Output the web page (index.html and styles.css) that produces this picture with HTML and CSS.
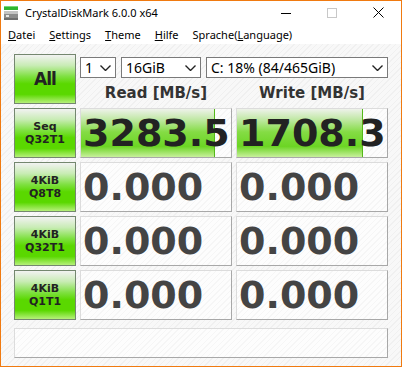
FILE: index.html
```html
<!DOCTYPE html>
<html lang="de">
<head>
    <meta charset="UTF-8">
    <title>CrystalDiskMark 6.0.0 x64</title>
    <link rel="stylesheet" href="styles.css">
</head>
<body>
    <div class="window">
        <div class="titlebar">
            <svg class="app-icon" width="14" height="14" viewBox="0 0 14 14">
                <rect x="0" y="0" width="14" height="4" fill="#2fb52f"/>
                <rect x="0" y="0" width="14" height="1" fill="#7ad97a"/>
                <rect x="0" y="5" width="14" height="9" fill="#8c8c8c"/>
                <rect x="0" y="5" width="14" height="3" fill="#c4c4c4"/>
                <rect x="0" y="12" width="14" height="2" fill="#6e6e6e"/>
                <rect x="2" y="9" width="3" height="2" fill="#e6e6e6"/>
            </svg>
            <span class="title">CrystalDiskMark 6.0.0 x64</span>
            <div class="controls">
                <span class="ctl">
                    <svg width="10" height="10" viewBox="0 0 10 10"><path d="M0 5.5h10" stroke="#000" stroke-width="1"/></svg>
                </span>
                <span class="ctl">
                    <svg width="10" height="10" viewBox="0 0 10 10"><rect x="0.5" y="0.5" width="9" height="9" fill="none" stroke="#c8c8c8"/></svg>
                </span>
                <span class="ctl">
                    <svg width="11" height="11" viewBox="0 0 11 11"><path d="M0.5 0.5l10 10M10.5 0.5l-10 10" stroke="#000" stroke-width="1"/></svg>
                </span>
            </div>
        </div>

        <div class="menubar">
            <span class="menu-item"><u>D</u>atei</span>
            <span class="menu-item"><u>S</u>ettings</span>
            <span class="menu-item"><u>T</u>heme</span>
            <span class="menu-item"><u>H</u>ilfe</span>
            <span class="menu-item">Sprache(<u>L</u>anguage)</span>
        </div>

        <div class="main">
            <div class="grid">
                <div class="btn btn-all">All</div>
                <div class="top-area">
                    <div class="selects">
                        <div class="select sel-count">1<svg class="chev" width="11" height="6" viewBox="0 0 11 6"><path d="M0.5 0.5l5 5 5-5" fill="none" stroke="#222" stroke-width="1.4"/></svg></div>
                        <div class="select sel-size">16GiB<svg class="chev" width="11" height="6" viewBox="0 0 11 6"><path d="M0.5 0.5l5 5 5-5" fill="none" stroke="#222" stroke-width="1.4"/></svg></div>
                        <div class="select sel-drive">C: 18% (84/465GiB)<svg class="chev" width="11" height="6" viewBox="0 0 11 6"><path d="M0.5 0.5l5 5 5-5" fill="none" stroke="#222" stroke-width="1.4"/></svg></div>
                    </div>
                    <div class="headers">
                        <div class="head">Read [MB/s]</div>
                        <div class="head">Write [MB/s]</div>
                    </div>
                </div>

                <div class="btn">Seq<br>Q32T1</div>
                <div class="value"><div class="bar" style="width: 89.4%"></div><span class="num done">3283.5</span></div>
                <div class="value"><div class="bar" style="width: 84%"></div><span class="num done">1708.3</span></div>

                <div class="btn">4KiB<br>Q8T8</div>
                <div class="value"><span class="num">0.000</span></div>
                <div class="value"><span class="num">0.000</span></div>

                <div class="btn">4KiB<br>Q32T1</div>
                <div class="value"><span class="num">0.000</span></div>
                <div class="value"><span class="num">0.000</span></div>

                <div class="btn">4KiB<br>Q1T1</div>
                <div class="value"><span class="num">0.000</span></div>
                <div class="value"><span class="num">0.000</span></div>
            </div>
            <div class="comment"></div>
        </div>
    </div>
</body>
</html>
```

FILE: styles.css
```css
* {
    box-sizing: border-box;
}

body {
    margin: 0;
    background: #ffffff;
}

.window {
    width: 402px;
    height: 367px;
    border: 1px solid #f07a10;
    display: flex;
    flex-direction: column;
    overflow: hidden;
    font-family: "Noto Sans", sans-serif;
    font-size: 11px;
    color: #000;
}

.titlebar {
    height: 23px;
    display: flex;
    align-items: center;
    background: #fff;
}

.app-icon {
    margin-left: 3px;
    margin-right: 7px;
}

.title {
    font-size: 11px;
}

.controls {
    margin-left: auto;
    display: flex;
    height: 100%;
}

.ctl {
    width: 46px;
    display: flex;
    align-items: center;
    justify-content: center;
}

.menubar {
    height: 20px;
    display: flex;
    align-items: center;
    background: #fff;
}

.menu-item {
    padding: 0 7px;
}

.main {
    flex: 1;
    padding: 10px 0 0 13px;
    background: repeating-linear-gradient(135deg, #f8f8f8 0px, #f8f8f8 3px, #f0f0f0 3px, #f0f0f0 4px);
}

.grid {
    display: grid;
    grid-template-columns: 62px 152px 152px;
    grid-auto-rows: 50px;
    gap: 4px;
}

.btn {
    border: 1px solid #74876f;
    background: linear-gradient(to bottom, #f2f2f2 0%, #c8ecb4 22%, #7ee040 45%, #5ad800 60%, #5ad800 82%, #b6f07a 100%);
    display: flex;
    align-items: center;
    justify-content: center;
    text-align: center;
    font-family: "DejaVu Sans", sans-serif;
    font-weight: bold;
    font-size: 11px;
    line-height: 13px;
    color: #222;
}

.btn-all {
    font-size: 17px;
    letter-spacing: -1px;
}

.top-area {
    grid-column: span 2;
    padding-top: 3px;
}

.selects {
    display: flex;
    gap: 5px;
}

.select {
    height: 21px;
    border: 1px solid #7a7a7a;
    background: #fff;
    display: flex;
    align-items: center;
    padding-left: 4px;
    padding-right: 4px;
    font-size: 14px;
}

.chev {
    margin-left: auto;
}

.sel-count {
    width: 36px;
}

.sel-size {
    width: 80px;
}

.sel-drive {
    width: 182px;
}

.headers {
    display: grid;
    grid-template-columns: 152px 152px;
    gap: 4px;
    margin-top: 6px;
}

.head {
    text-align: center;
    font-family: "DejaVu Sans", sans-serif;
    font-weight: bold;
    font-size: 15px;
    line-height: 18px;
    color: #333;
}

.value {
    position: relative;
    border: 1px solid;
    border-color: #dcdcdc #a8a8a8 #a8a8a8 #dcdcdc;
    background: repeating-linear-gradient(135deg, #fdfdfd 0px, #fdfdfd 3px, #f6f6f6 3px, #f6f6f6 4px);
    display: flex;
    align-items: center;
    overflow: hidden;
}

.bar {
    position: absolute;
    left: 0;
    top: 0;
    bottom: 0;
    border-right: 1px solid #55b71a;
    background: linear-gradient(to bottom, #eef2ea 0%, #c0e8a4 22%, #84dc44 48%, #6cd524 78%, #c8f09c 100%);
}

.num {
    position: relative;
    padding-left: 2px;
    font-family: "DejaVu Sans", sans-serif;
    font-weight: bold;
    font-size: 38px;
    line-height: 40px;
    color: #444;
    white-space: nowrap;
}

.num.done {
    color: #222;
}

.comment {
    margin-top: 8px;
    width: 374px;
    height: 30px;
    border: 1px solid;
    border-color: #dcdcdc #a8a8a8 #a8a8a8 #dcdcdc;
    background: repeating-linear-gradient(135deg, #fdfdfd 0px, #fdfdfd 3px, #f6f6f6 3px, #f6f6f6 4px);
}
```
